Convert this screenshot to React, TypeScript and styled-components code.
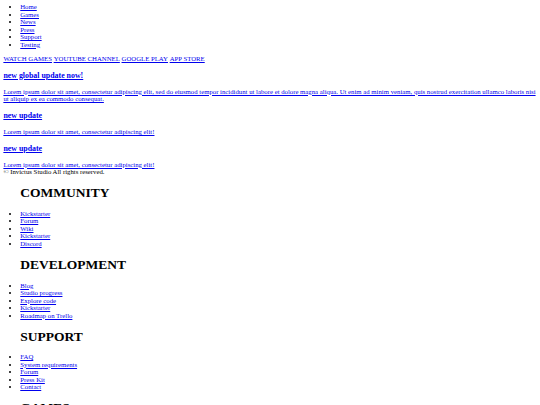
import React from 'react';
import styled, { createGlobalStyle } from 'styled-components';

const GlobalStyle = createGlobalStyle`
    html, body {
        background: #ffffff;
    }
    body {
        margin: 0.5em;
        font-family: 'Liberation Serif', 'Times New Roman', serif;
        font-size: 6.75px;
        line-height: 1.11;
        color: #000000;
    }
    a {
        color: #0000ee;
        text-decoration: underline;
    }
`;

const NavList = styled.ul`
    margin: 0 0 1em 0;
    padding-left: 2.5em;
    list-style: disc;
`;

const StoreBar = styled.div`
    display: block;
`;

const StoreLink = styled.a`
    margin-right: 0.25em;
`;

const News = styled.section`
    display: block;
`;

const NewsItem = styled.a`
    display: block;
`;

const NewsTitle = styled.h3`
    font-size: 1.17em;
    font-weight: bold;
    line-height: 1.1;
    margin: 9px 0 7.6px;
`;

const Footer = styled.footer`
    display: block;
`;

const Copyright = styled.div`
    display: block;
`;

const Column = styled.div`
    padding-left: 2.5em;
`;

const ColumnTitle = styled.h1`
    font-size: 2em;
    font-weight: bold;
    line-height: 1.1;
    margin: 10.6px 0 8.8px;
`;

const ColumnList = styled.ul`
    margin: 0 0 0 -2.5em;
    padding-left: 2.5em;
    list-style: disc;
`;

const nav = ['Home', 'Games', 'News', 'Press', 'Support', 'Testing'];
const stores = ['WATCH GAMES', 'YOUTUBE CHANNEL', 'GOOGLE PLAY', 'APP STORE'];

const news = [
    {
        title: 'new global update now!',
        text: 'Lorem ipsum dolor sit amet, consectetur adipiscing elit, sed do eiusmod tempor incididunt ut labore et dolore magna aliqua. Ut enim ad minim veniam, quis nostrud exercitation ullamco laboris nisi ut aliquip ex ea commodo consequat.',
    },
    { title: 'new update', text: 'Lorem ipsum dolor sit amet, consectetur adipiscing elit!' },
    { title: 'new update', text: 'Lorem ipsum dolor sit amet, consectetur adipiscing elit!' },
];

const columns = [
    { title: 'COMMUNITY', links: ['Kickstarter', 'Forum', 'Wiki', 'Kickstarter', 'Discord'] },
    { title: 'DEVELOPMENT', links: ['Blog', 'Studio progress', 'Explore code', 'Kickstarter', 'Roadmap on Trello'] },
    { title: 'SUPPORT', links: ['FAQ', 'System requirements', 'Forum', 'Press Kit', 'Contact'] },
    { title: 'GAMES', links: ['Invictus', 'Invictus Online', 'Arena'] },
];

export default function App() {
    return (
        <>
            <GlobalStyle />
            <header>
                <NavList>
                    {nav.map((item) => (
                        <li key={item}>
                            <a href="#">{item}</a>
                        </li>
                    ))}
                </NavList>
                <StoreBar>
                    {stores.map((s) => (
                        <StoreLink key={s} href="#">
                            {s}
                        </StoreLink>
                    ))}
                </StoreBar>
            </header>
            <News>
                {news.map((n, i) => (
                    <NewsItem key={i} href="#">
                        <NewsTitle>{n.title}</NewsTitle>
                        {n.text}
                    </NewsItem>
                ))}
            </News>
            <Footer>
                <Copyright>© Invictus Studio All rights reserved.</Copyright>
                {columns.map((c) => (
                    <Column key={c.title}>
                        <ColumnTitle>{c.title}</ColumnTitle>
                        <ColumnList>
                            {c.links.map((l, i) => (
                                <li key={i}>
                                    <a href="#">{l}</a>
                                </li>
                            ))}
                        </ColumnList>
                    </Column>
                ))}
            </Footer>
        </>
    );
}
